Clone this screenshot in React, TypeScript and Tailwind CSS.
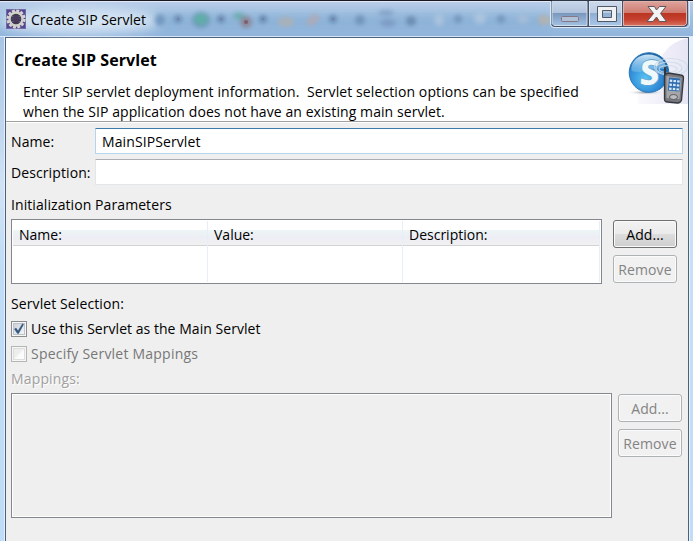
import React from 'react';

type ButtonProps = { label: string; disabled?: boolean };

function DialogButton({ label, disabled }: ButtonProps) {
  const look = disabled
    ? 'border-[#adb2b5] bg-[#f1f1f1] text-[#838383] shadow-[inset_0_0_0_1px_#fbfbfb]'
    : 'border-[#707070] bg-[linear-gradient(#f2f2f2_0,#ebebeb_48%,#dddddd_50%,#cfcfcf_100%)] text-black shadow-[inset_0_0_0_1px_#fafafa]';
  return (
    <button
      disabled={disabled}
      className={`flex h-7 w-16 items-center justify-center rounded-[3px] border pt-px tracking-[0.1px] ${look}`}
    >
      {label}
    </button>
  );
}

function GearIcon() {
  return (
    <svg width="20" height="20" viewBox="0 0 20 20" className="shrink-0">
      <rect width="20" height="20" fill="#54468c" />
      <rect x="0.5" y="0.5" width="19" height="19" fill="none" stroke="#7468a6" />
      <circle cx="10" cy="10" r="8.200" fill="none" stroke="#d4d4d0" strokeWidth="2.800" strokeDasharray="2.9 1.394" />
      <circle cx="10" cy="10" r="6.500" fill="#41394f" stroke="#cfd0cc" strokeWidth="2.400" />
      <path d="M5.500 10h9M6 12.500h8M6 7.500h8" stroke="#655785" strokeWidth="1" />
      <circle cx="10" cy="10" r="3.500" fill="#463b5c" />
    </svg>
  );
}

function BlurredToolbar() {
  return (
    <svg width="693" height="38" viewBox="0 0 693 38" className="absolute left-0 top-0">
      <defs>
        <filter id="soft" x="-50%" y="-50%" width="200%" height="200%">
          <feGaussianBlur stdDeviation="2" />
        </filter>
        <filter id="wide" x="-50%" y="-80%" width="200%" height="260%">
          <feGaussianBlur stdDeviation="6" />
        </filter>
      </defs>
      <rect x="150" y="14" width="400" height="12" fill="#78a3cc" opacity="0.5" filter="url(#wide)" />
      <ellipse cx="80" cy="20" rx="80" ry="13" fill="#e3edf8" opacity="0.8" filter="url(#wide)" />
      <g filter="url(#soft)" opacity="0.85">
        <ellipse cx="160" cy="19" rx="5" ry="6" fill="#6a92ba" />
        <circle cx="178" cy="18" r="4" fill="#6286b0" />
        <ellipse cx="201" cy="19" rx="9" ry="8" fill="#6a96b4" />
        <ellipse cx="201" cy="18" rx="6.500" ry="5.500" fill="#57ada0" />
        <circle cx="221" cy="18" r="4" fill="#6083ac" />
        <ellipse cx="239" cy="15" rx="6" ry="3" fill="#5eaaa5" />
        <circle cx="246" cy="21" r="6" fill="#8a8290" />
        <circle cx="263" cy="18" r="4" fill="#6083ac" />
        <ellipse cx="286" cy="21" rx="8" ry="5" fill="#aeb0b2" />
        <path d="M308 23l10-8" stroke="#b2a9b2" strokeWidth="7" />
        <circle cx="333" cy="18" r="4" fill="#6083ac" />
        <circle cx="360" cy="19" r="5" fill="#6d90b5" />
        <ellipse cx="386" cy="12" rx="8" ry="3" fill="#809fc5" />
        <ellipse cx="388" cy="22" rx="8" ry="4" fill="#7b98c3" />
        <circle cx="411" cy="20" r="5" fill="#6687aa" />
        <ellipse cx="439" cy="19" rx="5" ry="6" fill="#aec4de" />
        <circle cx="458" cy="18" r="4" fill="#6f91b8" />
        <ellipse cx="480" cy="17" rx="6" ry="6" fill="#aec6e0" />
        <circle cx="501" cy="18" r="4" fill="#6f91b8" />
        <ellipse cx="523" cy="18" rx="6" ry="5" fill="#a6bed8" />
        <ellipse cx="544" cy="19" rx="6" ry="5" fill="#b8b2a8" />
      </g>
      <circle cx="178" cy="18" r="1" fill="#827a9c" />
      <circle cx="221" cy="18" r="1" fill="#827a9c" />
      <circle cx="246" cy="21" r="2" fill="#805e6b" />
      <circle cx="263" cy="18" r="1" fill="#827a9c" />
      <circle cx="333" cy="18" r="1" fill="#827a9c" />
    </svg>
  );
}

function WindowControls() {
  return (
    <svg width="140" height="28" viewBox="0 0 140 28" className="absolute -top-px left-[550px]">
      <defs>
        <linearGradient id="glass" x1="0" y1="0" x2="0" y2="1">
          <stop offset="0" stopColor="#c6d5e9" />
          <stop offset="0.46" stopColor="#b1c3dc" />
          <stop offset="0.5" stopColor="#7998bd" />
          <stop offset="1" stopColor="#a2c1e2" />
        </linearGradient>
        <linearGradient id="glassLight" x1="0" y1="0" x2="0" y2="1">
          <stop offset="0" stopColor="#ccd9eb" />
          <stop offset="0.46" stopColor="#bccde2" />
          <stop offset="0.5" stopColor="#8fafd3" />
          <stop offset="1" stopColor="#a8c6e6" />
        </linearGradient>
        <linearGradient id="red" x1="0" y1="0" x2="0" y2="1">
          <stop offset="0" stopColor="#dca39b" />
          <stop offset="0.46" stopColor="#d07c72" />
          <stop offset="0.48" stopColor="#b93421" />
          <stop offset="0.75" stopColor="#c6402f" />
          <stop offset="1" stopColor="#d6705e" />
        </linearGradient>
      </defs>
      <path d="M0.500 1V24Q0.500 27.500 4 27.500H135Q139.500 27.500 139.500 24V1" fill="none" stroke="#dce8f5" />
      <path d="M31 1H1.500V23Q1.500 26.500 5 26.500H134Q137.500 26.500 137.500 23V1Z" fill="#475266" stroke="#475266" />
      <path d="M2.500 1.500H37.500V25.500H4.500L2.500 23.500Z" fill="url(#glass)" stroke="#cfdcec" transform="translate(-0.500 0)" />
      <rect x="39.500" y="1.500" width="32" height="24" fill="url(#glassLight)" stroke="#dbe5f1" />
      <path d="M73.500 1.500H136.500V23.500L134.500 25.500H73.500Z" fill="url(#red)" stroke="#e5b0a8" />
      <rect x="11.500" y="16.500" width="17" height="5" rx="1" fill="#b0c1d7" stroke="#857684" />
      <path d="M47.500 6.500H66.500V21.500H47.500Z M52.500 10.500V17.500H61.500V10.500Z" fill="#f0f1f2" fillRule="evenodd" stroke="#515969" />
      <path d="M98.500 6.500H105L107 10L110 6.500H116.500L111 13.500L117 21.500H110L107 17L103.500 21.500H97.500L104 13.500Z" transform="translate(-0.500 0)" fill="#f3f3f3" stroke="#61565e" strokeLinejoin="round" />
    </svg>
  );
}

function SipLogo() {
  return (
    <svg width="68" height="76" viewBox="0 0 68 76" className="shrink-0">
      <defs>
        <radialGradient id="ball" cx="0.4" cy="0.65" r="0.65">
          <stop offset="0" stopColor="#59c3f4" />
          <stop offset="0.65" stopColor="#2c87d4" />
          <stop offset="1" stopColor="#175f9f" />
        </radialGradient>
        <linearGradient id="shine" x1="0" y1="0" x2="0" y2="1">
          <stop offset="0" stopColor="#e2f4fe" stopOpacity="0.9" />
          <stop offset="1" stopColor="#8cc6ee" stopOpacity="0.4" />
        </linearGradient>
        <linearGradient id="haze" x1="0" y1="0" x2="1" y2="0">
          <stop offset="0" stopColor="#faf9fd" />
          <stop offset="1" stopColor="#e6e5f4" />
        </linearGradient>
        <radialGradient id="shadow">
          <stop offset="0" stopColor="#8792a2" />
          <stop offset="1" stopColor="#fff" stopOpacity="0" />
        </radialGradient>
      </defs>
      <path d="M68 0Q48 4 40 22L18 50V66H68Z" fill="url(#haze)" />
      <ellipse cx="26" cy="54.500" rx="20" ry="2.500" fill="url(#shadow)" />
      <circle cx="29" cy="34.500" r="19.800" fill="url(#ball)" stroke="#2877b4" />
      <path d="M11.500 33C10.500 23 18.500 16.500 28.500 16.500S46.500 23 46.500 32C33.500 27 25.500 37 11.500 33Z" fill="url(#shine)" />
      <text x="19" y="47" fontFamily="Open Sans, sans-serif" fontWeight="800" fontSize="35" fill="#eff9fc" stroke="#5598c5" strokeWidth="0.600" transform="skewX(-4) translate(3 0)">S</text>
      <g fill="none" stroke="#c9dce8" strokeWidth="1.200" opacity="0.8">
        <ellipse cx="51" cy="29" rx="16.500" ry="8.500" />
        <ellipse cx="49" cy="30" rx="13" ry="6" />
        <ellipse cx="48" cy="31" rx="9" ry="3.500" />
      </g>
      <rect x="44" y="29" width="2.200" height="14" rx="1" fill="#333840" />
      <g transform="translate(7.500 -1)">
        <path d="M37 39Q38 36 41 36L53 38Q56 38 56 41L54 63Q53 66 50 66L40 65Q37 65 37 62Z" fill="#77787d" stroke="#343940" strokeWidth="1.300" />
        <path d="M39 39L54 41L52 62L39 61Z" fill="#a6a5a8" />
        <g transform="rotate(5 46 47)">
          <rect x="41" y="41" width="11.500" height="13" fill="#2e6db0" />
          <path d="M42 44h10M42 48h10M42 52h10" stroke="#d9eafa" strokeWidth="2.200" strokeDasharray="2.500 1.200" />
        </g>
        <ellipse cx="46" cy="60" rx="4" ry="2.500" fill="#bdbdc0" stroke="#595d64" />
      </g>
    </svg>
  );
}

function CheckBox({ checked }: { checked?: boolean }) {
  return (
    <svg width="16" height="16" viewBox="0 0 16 16" className="-mt-px shrink-0">
      <defs>
        <linearGradient id="on" x1="0" y1="0" x2="1" y2="1">
          <stop offset="0" stopColor="#cbd0d6" />
          <stop offset="1" stopColor="#f5f6f7" />
        </linearGradient>
        <linearGradient id="off" x1="0" y1="0" x2="1" y2="1">
          <stop offset="0.4" stopColor="#ededed" />
          <stop offset="0.6" stopColor="#fcfcfc" />
        </linearGradient>
      </defs>
      <rect x="0.500" y="0.500" width="15" height="15" fill="#f6f6f6" stroke={checked ? '#8b8c8d' : '#b4b5b5'} />
      <rect x="2.500" y="2.500" width="11" height="11" fill={checked ? 'url(#on)' : 'url(#off)'} stroke={checked ? '#bcc3ca' : '#dedede'} />
      {checked && <path d="M3.500 8L5 7L7 10L11.500 2.800L12.500 3.500L7.500 12.500H6.500Z" fill="#31547f" stroke="#31547f" strokeWidth="0.500" />}
    </svg>
  );
}

const columns = [
  { label: 'Name:', width: 'w-[195px]', header: 'pl-[6px]' },
  { label: 'Value:', width: 'w-[195px]', header: 'pl-[6px]' },
  { label: 'Description:', width: 'w-[197px]', header: 'pl-[6px]' },
];

export default function App() {
  return (
    <div className="relative flex h-[541px] w-[693px] flex-col overflow-hidden bg-[#c5ddf5] font-['Open_Sans',sans-serif] text-[14px] leading-5 text-black">
      <div className="relative h-[37px] shrink-0 border-t border-[#171822] bg-linear-to-b from-[#b9cde9] via-[#9dbfdf] to-[#91b4dd] shadow-[inset_0_1px_0_#e2e9f5,inset_0_-1px_0_#d9e8f5]">
        <BlurredToolbar />
        <div className="relative flex h-9 items-center gap-[5px] pl-[6px]">
          <GearIcon />
          <h1 className="pt-px">Create SIP Servlet</h1>
        </div>
        <WindowControls />
      </div>
      <div className="flex min-h-0 flex-1">
        <div className="w-[5px] shrink-0 border-r border-[#e3f0fc] bg-linear-to-b from-[#a9c5e5] via-[#d1e2f4] via-30% to-[#c1dcf7] to-45%" />
        <main className="flex w-[684px] shrink-0 flex-col border-x border-t border-[#4b617c] bg-[#efefef]">
          <header className="flex h-[84px] shrink-0 justify-between border-b border-[#a0a0a0] bg-white">
            <div className="pl-2 pt-[12px]">
              <h2 className="text-[16px] font-bold leading-5 tracking-[0.08px]">Create SIP Servlet</h2>
              <p className="mt-[12px] whitespace-pre pl-[9px]">
                <span className="tracking-[0.1px]">Enter SIP servlet deployment information.  Servlet selection options can be specified</span>
                {'\n'}
                <span className="tracking-[0.075px]">when the SIP application does not have an existing main servlet.</span>
              </p>
            </div>
            <SipLogo />
          </header>
          <div className="h-px shrink-0 bg-white" />
          <section className="mt-[5px] flex flex-col gap-[5px] pl-[5px] pr-[5px]">
            <label className="flex h-[26px] items-center">
              <span className="w-[84px] pt-px tracking-[0.1px]">Name:</span>
              <input defaultValue="MainSIPServlet" className="h-[26px] flex-1 rounded-[1px] border border-[#b5d5eb] border-t-[#3d7bad] bg-white pl-[6px] tracking-[0.1px]" />
            </label>
            <label className="flex h-[26px] items-center">
              <span className="w-[84px] pt-[2px] tracking-[0.1px]">Description:</span>
              <input className="h-[26px] flex-1 rounded-[1px] border border-[#e2e6e9] border-t-[#abadb3] bg-white" />
            </label>
          </section>
          <h3 className="ml-[5px] mt-[10px] tracking-[0.08px]">Initialization Parameters</h3>
          <section className="mt-[4px] flex gap-[11px] pl-[5px]">
            <div className="flex h-[65px] w-[591px] border border-[#828790] bg-white p-px">
              {columns.map((c) => (
                <div key={c.label} className={`${c.width} border-r border-[#e6eef7]`}>
                  <div className={`${c.header} h-[25px] border-b border-[#d3d3d6] bg-[linear-gradient(#fff_0,#fff_38%,#edf5f5_39%,#ededf5_70%,#f1f1f1)] leading-[27px]`}>{c.label}</div>
                </div>
              ))}
            </div>
            <div className="flex flex-col gap-[7px] pt-px">
              <DialogButton label="Add..." />
              <DialogButton label="Remove" disabled />
            </div>
          </section>
          <h3 className="ml-[5px] mt-[10px] tracking-[0.1px]">Servlet Selection:</h3>
          <section className="ml-[5px] mt-[5px] flex flex-col gap-[5px]">
            <div className="flex h-5 items-center gap-1"><CheckBox checked /><span className="tracking-[0.04px]">Use this Servlet as the Main Servlet</span></div>
            <div className="flex h-5 items-center gap-1 text-[#777]"><CheckBox /><span className="tracking-[0.22px]">Specify Servlet Mappings</span></div>
          </section>
          <h3 className="ml-[5px] mt-[5px] tracking-[0.15px] text-[#a0a0a0] [text-shadow:1px_1px_0_#fff]">Mappings:</h3>
          <section className="mt-[4px] flex gap-[6px] pl-[5px]">
            <div className="h-[125px] w-[601px] border border-[#828790] shadow-[inset_0_0_0_1px_#fff]" />
            <div className="flex flex-col gap-[7px] pt-px">
              <DialogButton label="Add..." disabled />
              <DialogButton label="Remove" disabled />
            </div>
          </section>
        </main>
        <div className="flex-1 border-l border-[#e8f3fc] bg-linear-to-b from-[#e4effa] via-[#c9e0f8] via-25% to-[#c1dcf7]" />
      </div>
    </div>
  );
}
